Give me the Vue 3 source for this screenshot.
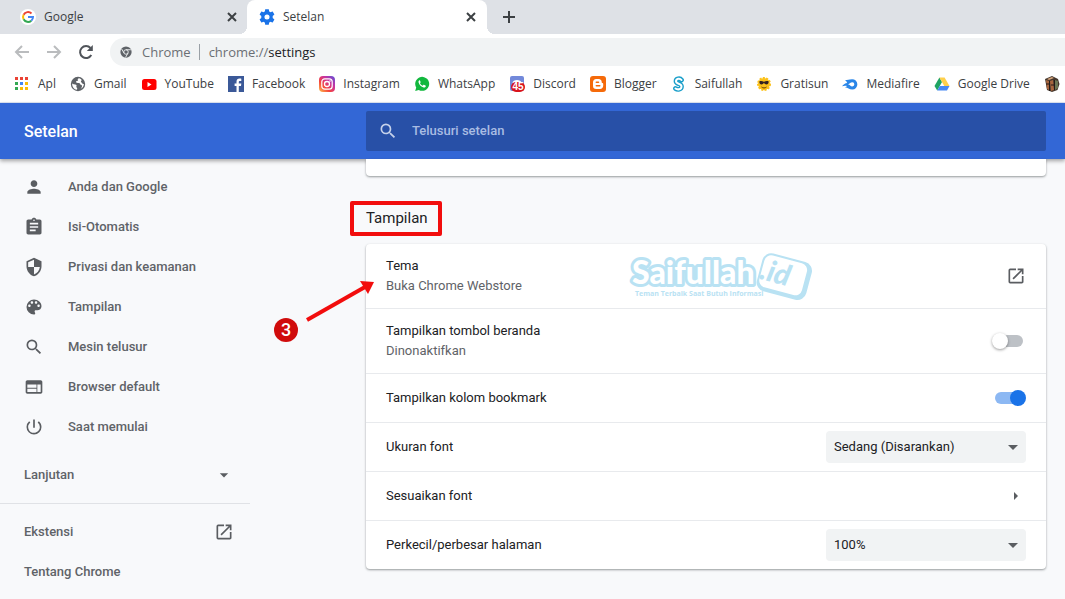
<script setup>
import { ref } from 'vue'

const search = ref('')
const homeButton = ref(false)
const bookmarkBar = ref(true)
const fontSize = ref('Sedang (Disarankan)')
const zoom = ref('100%')

const fontSizes = ['Sangat kecil', 'Kecil', 'Sedang (Disarankan)', 'Besar', 'Sangat besar']
const zooms = ['75%', '90%', '100%', '110%', '125%', '150%']

const searchPath = 'M15.5 14h-.79l-.28-.27A6.47 6.47 0 0 0 16 9.5 6.5 6.5 0 1 0 9.5 16c1.61 0 3.09-.59 4.23-1.57l.27.28v.79l5 4.99L20.49 19l-4.99-5zm-6 0C7.01 14 5 11.99 5 9.5S7.01 5 9.5 5 14 7.01 14 9.5 11.99 14 9.5 14z'
const openPath = 'M19 19H5V5h7V3H5a2 2 0 0 0-2 2v14a2 2 0 0 0 2 2h14c1.1 0 2-.9 2-2v-7h-2v7zM14 3v2h3.59l-9.83 9.83 1.41 1.41L19 6.41V10h2V3h-7z'

const menu = [
  { name: 'Anda dan Google', path: 'M12 12c2.21 0 4-1.79 4-4s-1.79-4-4-4-4 1.79-4 4 1.79 4 4 4zm0 2c-2.67 0-8 1.34-8 4v2h16v-2c0-2.66-5.33-4-8-4z' },
  { name: 'Isi-Otomatis', path: 'M19 3h-4.18C14.4 1.84 13.3 1 12 1s-2.4.84-2.82 2H5c-1.1 0-2 .9-2 2v14c0 1.1.9 2 2 2h14c1.1 0 2-.9 2-2V5c0-1.1-.9-2-2-2zm-7 0c.55 0 1 .45 1 1s-.45 1-1 1-1-.45-1-1 .45-1 1-1zm2 14H7v-2h7v2zm3-4H7v-2h10v2zm0-4H7V7h10v2z' },
  { name: 'Privasi dan keamanan', path: 'M12 1L3 5v6c0 5.55 3.84 10.74 9 12 5.16-1.26 9-6.45 9-12V5l-9-4zm0 10.99h7c-.53 4.12-3.28 7.79-7 8.94V12H5V6.3l7-3.11v8.8z' },
  { name: 'Tampilan', path: 'M12 3a9 9 0 0 0 0 18c.83 0 1.5-.67 1.5-1.5 0-.39-.15-.74-.39-1.01-.23-.26-.38-.61-.38-.99 0-.83.67-1.5 1.5-1.5H16c2.76 0 5-2.24 5-5 0-4.42-4.03-8-9-8zm-5.5 9c-.83 0-1.5-.67-1.5-1.5S5.67 9 6.5 9 8 9.67 8 10.5 7.33 12 6.5 12zm3-4C8.67 8 8 7.33 8 6.5S8.67 5 9.5 5s1.5.67 1.5 1.5S10.33 8 9.5 8zm5 0c-.83 0-1.5-.67-1.5-1.5S13.67 5 14.5 5s1.5.67 1.5 1.5S15.33 8 14.5 8zm3 4c-.83 0-1.5-.67-1.5-1.5S16.67 9 17.5 9s1.5.67 1.5 1.5-.67 1.5-1.5 1.5z' },
  { name: 'Mesin telusur', path: searchPath },
  { name: 'Browser default', path: 'M20 4H4c-1.1 0-1.99.9-1.99 2L2 18c0 1.1.9 2 2 2h16c1.1 0 2-.9 2-2V6c0-1.1-.9-2-2-2zm-5 14H4v-4h11v4zm0-5H4V9h11v4zm5 5h-4V9h4v9z' },
  { name: 'Saat memulai', path: 'M13 3h-2v10h2V3zm4.83 2.17l-1.42 1.42A6.92 6.92 0 0 1 19 12c0 3.87-3.13 7-7 7A6.995 6.995 0 0 1 7.58 6.58L6.17 5.17A8.932 8.932 0 0 0 3 12a9 9 0 0 0 18 0c0-2.74-1.23-5.18-3.17-6.83z' }
]

const bookmarks = [
  { name: 'Apl', icon: '<path fill="#ea4335" d="M1 1h3v3H1zM6 1h3v3H6zM11 1h3v3h-3z"/><path fill="#34a853" d="M1 6h3v3H1zM1 11h3v3H1z"/><path fill="#4285f4" d="M6 6h3v3H6z"/><path fill="#fbbc05" d="M11 6h3v3h-3zM6 11h3v3H6zM11 11h3v3h-3z"/>' },
  { name: 'Gmail', icon: '<circle cx="8" cy="8" r="7.2" fill="#5f6368"/><path fill="#fff" d="M9 2.300c-1 .3-1.500 1-1.200 1.600.4.700-.2 1.200-1 1.200-.9 0-.9.900-.5 1.300.7.600 2.200.2 3 .7.900.6.600 1.500 1.600 1.700 1 .2 1.300 1 1 1.900-.3 1-1 1.900-1.900 2.400a6 6 0 0 0 3.900-5.200c-.7.300-1.500.2-1.700-.6-.2-.8-1.200-.6-1.300-1.500 0-.8.8-.9.700-1.700C11.400 3.300 10.300 2.500 9 2.300zM2.200 7.500c.9.600 1.800 1 3 1 1.200.100 1.700.900 1.200 1.800-.3.600.1 1.100.5 1.500.5.500.3 1.300 0 2-2.800-.3-5-3-4.700-6.300z"/>' },
  { name: 'YouTube', icon: '<rect x="1" y="3" width="14.500" height="11" rx="2.500" fill="#f00"/><path fill="#fff" d="M6.500 6v5l4-2.500z"/>' },
  { name: 'Facebook', icon: '<path fill="#3b5998" d="M0 0h16v16H0z"/><path fill="#fff" d="M8.500 16V10H6.600V7.500h1.900V5.700c0-2 1.200-3.100 3-3.100.9 0 1.600.1 1.800.100v2.200H12c-1 0-1.200.5-1.200 1.200v1.400h2.500L13 10h-2.200v6z"/>' },
  { name: 'Instagram', icon: '<defs><linearGradient id="ig" x1="0" y1="1" x2="1" y2="0"><stop offset="0" stop-color="#fdc04b"/><stop offset=".35" stop-color="#f5433d"/><stop offset=".65" stop-color="#c832a0"/><stop offset="1" stop-color="#5851db"/></linearGradient></defs><rect width="16" height="16" rx="4" fill="url(#ig)"/><rect x="2.800" y="2.800" width="10.400" height="10.400" rx="3" fill="none" stroke="#fff" stroke-width="1.200"/><circle cx="8" cy="8" r="2.500" fill="none" stroke="#fff" stroke-width="1.300"/><circle cx="11" cy="5" r=".8" fill="#fff"/>' },
  { name: 'WhatsApp', icon: '<path fill="#12b83e" d="M1.200 15l1-3.500A7 7 0 1 1 4.800 14z"/><path fill="#fff" d="M5.600 4.300c-.8.300-1.300 1.200-1 2.300.7 2.500 2.600 4.300 5 4.900 1.100.2 2-.4 2.200-1.200.1-.5 0-.6-.4-.8L9.900 8.800c-.3-.1-.4 0-.6.200l-.6.7C7.500 9.300 6.500 8.300 6 7.200l.5-.6c.2-.2.200-.4.100-.600L6 4.600c-.1-.2-.2-.3-.4-.3z"/>' },
  { name: 'Discord', icon: '<rect x="1" y="0" width="14" height="15" rx="2" fill="#7289da"/><path fill="#fff" d="M3.500 7c0-4 9-4 9 0z"/><rect x="2" y="6" width="14" height="10" rx="5" fill="#d9141c"/><text x="9" y="14" text-anchor="middle" font-family="Liberation Sans, sans-serif" font-size="10" font-weight="bold" fill="#fff">45</text>' },
  { name: 'Blogger', icon: '<rect width="16" height="16" rx="3" fill="#f56a0a"/><path fill="#fff" fill-rule="evenodd" d="M6.200 3h2.500c1.900 0 3 1.400 3 3 0 .6.200 1 .8 1 .4 0 .7.300.7.700v2c0 1.900-1.300 3.300-3.200 3.300H6.200A3.200 3.200 0 0 1 3 9.800V6.200C3 4.300 4.300 3 6.200 3zm.1 2.600a.7.700 0 0 0 0 1.500h2.200a.7.700 0 0 0 0-1.500zm0 3.500a.7.700 0 0 0 0 1.500h3.500a.7.700 0 0 0 0-1.500z"/>' },
  { name: 'Saifullah', icon: '<path fill="none" stroke="#1b9fca" stroke-width="4.800" stroke-linecap="round" stroke-linejoin="round" d="M10.500 4C9 2 5 2.500 5 5.300 5 8.500 10.500 7 10.500 10.500 10.500 13.600 6.500 14 4.500 12.500"/><path fill="none" stroke="#fff" stroke-width="2" stroke-linecap="round" d="M10.500 4C9 2 5 2.500 5 5.300 5 8.500 10.500 7 10.500 10.500 10.500 13.600 6.500 14 4.500 12.500"/>' },
  { name: 'Gratisun', icon: '<circle cx="8" cy="8" r="6" fill="#fcc21b" stroke="#fcc21b" stroke-width="2" stroke-dasharray="2 1.300"/><path fill="#322" d="M3.300 5.500c1.400-.7 2.900-.5 4.700.3 1.800-.8 3.300-1 4.700-.3 0 1.800-.9 3-2.200 3C9.400 8.500 8.500 7.800 8 6.800c-.5 1-1.400 1.700-2.500 1.700-1.300 0-2.200-1.200-2.200-3z"/><path fill="none" stroke="#6b3b00" d="M5.500 11c1.500 1.300 3.500 1.300 5 0"/>' },
  { name: 'Mediafire', icon: '<path fill="#2a86e8" fill-rule="evenodd" d="M3 4c2 .2 3.500-.8 7-.8a5.200 5.200 0 0 1 .3 10.400c-3.300 0-4.300-2.100-7.300-2.300 1-.4 1.500-.8 2-1.300-1.500-.5-3-.4-5 .2 1.500-2 3.300-2.900 5.200-3.200C4.800 5.800 4 4.800 3 4zm7.200 2.200c-1.700 0-2.400 1.400-4.200 2 2 .4 2.500 2.200 4.300 2.200a2.100 2.100 0 0 0-.1-4.200z"/>' },
  { name: 'Google Drive', icon: '<path fill="#1fa463" d="M5.400 1.500L.5 10l2.700 4.500L8 6z"/><path fill="#ffd04b" d="M5.400 1.500h5.200L15.500 10h-5.200z"/><path fill="#4688f4" d="M3.200 14.500L5.800 10h9.700L13 14.500z"/>' },
  { name: '', icon: '<path fill="#45372d" d="M1 3l7-3 6 3 1.500 5-2 6L8 16l-5-2z"/><path fill="#a8653e" d="M2 4l3 1v9l-2-1zM6 5l3-1 1 10-3 1z"/><path fill="#d6a57c" d="M3 3l5-2 2 1-5 2z"/><path fill="#6b7554" d="M11 4l3 1v7l-3 2z"/><path stroke="#231b18" d="M5.500 5v10M10.500 4v10M2 8h3M7 9h3"/>' }
]
</script>

<template>
  <div class="browser">
    <div class="tabs">
      <div class="tab">
        <svg class="favicon" viewBox="0 0 16 16">
          <circle cx="8" cy="8" r="8" fill="#fff" />
          <g fill="none" stroke-width="2">
            <path stroke="#ea4335" d="M3.600 5.700A5 5 0 0 1 11.500 4.500" />
            <path stroke="#fbbc05" d="M3.600 10.300A5 5 0 0 1 3.600 5.700" />
            <path stroke="#34a853" d="M11.300 11.700A5 5 0 0 1 3.600 10.300" />
            <path stroke="#4285f4" d="M8 8h5a5 5 0 0 1-1.700 3.700" />
          </g>
        </svg>
        <span class="tab-name">Google</span>
        <button class="tab-close" aria-label="Tutup Google">
          <svg viewBox="0 0 10 10"><path d="M1 1l8 8M9 1L1 9" /></svg>
        </button>
      </div>
      <div class="tab active">
        <svg class="favicon" viewBox="0 0 24 24">
          <path fill="#1a73e8" d="M20.500 13.500c.1-.5.1-1 .1-1.500s0-1-.1-1.500l2.300-1.800c.2-.2.300-.5.100-.8l-2.200-3.800c-.1-.3-.4-.3-.7-.3l-2.800 1.100c-.7-.4-1.300-.8-2-1.100L14.800.9c0-.3-.3-.5-.6-.5H9.800c-.3 0-.5.200-.6.500l-.4 2.900c-.7.300-1.400.7-2 1.100L4 3.800c-.3 0-.6 0-.7.300L1.100 7.900c-.2.300-.1.600.1.800l2.300 1.800c-.1.500-.1 1-.1 1.500s0 1 .1 1.500l-2.300 1.800c-.2.200-.3.500-.1.800l2.200 3.800c.1.300.4.300.7.300l2.800-1.100c.6.400 1.300.8 2 1.100l.4 2.900c.1.300.3.500.6.500h4.400c.3 0 .6-.2.600-.5l.4-2.900c.7-.3 1.300-.7 2-1.100l2.800 1.100c.3 0 .6 0 .7-.3l2.200-3.800c.2-.3.100-.6-.1-.8zM12 15.800a3.800 3.800 0 1 1 0-7.600 3.800 3.800 0 0 1 0 7.600z" />
        </svg>
        <span class="tab-name">Setelan</span>
        <button class="tab-close" aria-label="Tutup Setelan">
          <svg viewBox="0 0 10 10"><path d="M1 1l8 8M9 1L1 9" /></svg>
        </button>
      </div>
      <button class="new-tab" aria-label="Tab baru">
        <svg viewBox="0 0 12 12"><path d="M6 0v12M0 6h12" /></svg>
      </button>
    </div>

    <div class="toolbar">
      <button class="nav off" aria-label="Kembali">
        <svg viewBox="0 0 16 16"><path d="M15 8H2M8 2L2 8l6 6" /></svg>
      </button>
      <button class="nav off" aria-label="Maju">
        <svg viewBox="0 0 16 16"><path d="M1 8h13M8 2l6 6-6 6" /></svg>
      </button>
      <button class="nav" aria-label="Muat ulang">
        <svg viewBox="0 0 16 16"><path d="M13.300 11A6 6 0 1 1 12.500 4" /><path class="solid" d="M14.800 1v6H8.800z" /></svg>
      </button>
      <div class="address">
        <svg class="chrome-icon" viewBox="0 0 16 16">
          <circle cx="8" cy="8" r="7.500" fill="#5f6368" />
          <circle cx="8" cy="8" r="3" fill="none" stroke="#f1f3f4" stroke-width="1.200" />
          <path d="M8 5h6.500M5.400 9.500L2.200 4M10.600 9.500l-3.200 5.700" stroke="#f1f3f4" stroke-width="1.200" />
        </svg>
        <span class="origin">Chrome</span>
        <span class="url">chrome://<b>settings</b></span>
      </div>
    </div>

    <nav class="bookmarks">
      <a v-for="(b, i) in bookmarks" :key="i" href="#" class="bookmark">
        <svg viewBox="0 0 16 16" v-html="b.icon"></svg>
        <span v-if="b.name">{{ b.name }}</span>
      </a>
    </nav>

    <header class="header">
      <h1>Setelan</h1>
      <label class="search">
        <svg viewBox="0 0 24 24"><path :d="searchPath" /></svg>
        <input v-model="search" type="text" placeholder="Telusuri setelan" aria-label="Telusuri setelan" />
      </label>
    </header>

    <div class="body">
      <aside class="sidebar">
        <a v-for="item in menu" :key="item.name" href="#" class="menu-item">
          <svg class="icon" viewBox="0 0 24 24"><path :d="item.path" /></svg>
          {{ item.name }}
        </a>
        <button class="menu-item advanced">
          Lanjutan
          <svg class="icon" viewBox="0 0 24 24"><path d="M7 10l5 5 5-5z" /></svg>
        </button>
        <div class="links">
          <a href="#" class="menu-item spread">
            Ekstensi
            <svg class="icon" viewBox="0 0 24 24"><path :d="openPath" /></svg>
          </a>
          <a href="#" class="menu-item">Tentang Chrome</a>
        </div>
      </aside>

      <main class="content">
        <div class="card previous"></div>
        <h2>Tampilan</h2>

        <div class="card">
          <div class="row tall">
            <div>
              <div>Tema</div>
              <div class="sub">Buka Chrome Webstore</div>
            </div>
            <button class="icon-button" aria-label="Buka Chrome Webstore">
              <svg class="icon" viewBox="0 0 24 24"><path :d="openPath" /></svg>
            </button>
          </div>
          <div class="row tall">
            <label for="home">
              Tampilkan tombol beranda
              <span class="sub">Dinonaktifkan</span>
            </label>
            <input id="home" v-model="homeButton" class="switch" type="checkbox" />
          </div>
          <div class="row">
            <label for="bar">Tampilkan kolom bookmark</label>
            <input id="bar" v-model="bookmarkBar" class="switch" type="checkbox" />
          </div>
          <div class="row">
            <label for="size">Ukuran font</label>
            <div class="select">
              <select id="size" v-model="fontSize">
                <option v-for="s in fontSizes" :key="s">{{ s }}</option>
              </select>
              <svg viewBox="0 0 10 5"><path d="M0 0h10L5 5z" /></svg>
            </div>
          </div>
          <div class="row">
            <span>Sesuaikan font</span>
            <button class="icon-button" aria-label="Sesuaikan font">
              <svg class="icon" viewBox="0 0 20 20"><path d="M8 6l4 4-4 4z" /></svg>
            </button>
          </div>
          <div class="row">
            <label for="zoom">Perkecil/perbesar halaman</label>
            <div class="select">
              <select id="zoom" v-model="zoom">
                <option v-for="z in zooms" :key="z">{{ z }}</option>
              </select>
              <svg viewBox="0 0 10 5"><path d="M0 0h10L5 5z" /></svg>
            </div>
          </div>

          <svg class="watermark" viewBox="0 0 184 52">
            <text class="brand" x="3" y="33">Saifullah</text>
            <text class="slogan" x="6" y="45">Teman Terbaik Saat Butuh Informasi</text>
            <g transform="rotate(15 155 25)">
              <rect x="130" y="6" width="51" height="39" rx="9" fill="#b9e2f3" />
              <rect x="132" y="8" width="44" height="33" rx="7" fill="#fff" />
              <text class="domain" x="131" y="34">.id</text>
            </g>
          </svg>
          <svg class="step" viewBox="0 0 104 64">
            <path d="M34 41L92 8" stroke="#f20d0d" stroke-width="4" />
            <path d="M101 3L87 2l8 13z" fill="#f20d0d" />
            <circle cx="13" cy="51" r="12" fill="#d00c0c" />
            <text x="13" y="57" text-anchor="middle">3</text>
          </svg>
        </div>
      </main>
    </div>
  </div>
</template>

<style>
body {
  margin: 0;
  background: #f8f9fb;
}
</style>

<style scoped>
* {
  box-sizing: border-box;
}

.browser {
  min-height: 100vh;
  overflow: hidden;
  font: 13px/20px Roboto, sans-serif;
  color: #202124;
}

button {
  padding: 0;
  border: 0;
  background: none;
  font: inherit;
  color: inherit;
}

a {
  color: inherit;
  text-decoration: none;
}

.tabs {
  display: flex;
  height: 34px;
  background: #dee1e6;
  font: 12px/16px "Open Sans", sans-serif;
  color: #3c4043;
}

.tab {
  display: flex;
  align-items: center;
  width: 247px;
  padding: 0 10px 0 20px;
}

.tab.active {
  position: relative;
  width: 240px;
  padding: 0 11px 0 12px;
  background: #fff;
  border-radius: 8px 8px 0 0;
}

.tab.active::before,
.tab.active::after {
  content: '';
  position: absolute;
  bottom: 0;
  width: 8px;
  height: 8px;
}

.tab.active::before {
  right: 100%;
  background: radial-gradient(circle at 0 0, transparent 8px, #fff 8px);
}

.tab.active::after {
  left: 100%;
  background: radial-gradient(circle at 100% 0, transparent 8px, #fff 8px);
}

.favicon {
  width: 16px;
  height: 16px;
  margin-right: 8px;
}

.tab-name {
  flex: 1;
}

.tab-close {
  display: flex;
}

.tab-close svg {
  width: 10px;
  height: 10px;
  stroke: #3c4043;
  stroke-width: 2;
}

.new-tab {
  display: flex;
  align-items: center;
  margin-left: 16px;
}

.new-tab svg {
  width: 12px;
  height: 12px;
  stroke: #3c4043;
  stroke-width: 2;
}

.toolbar {
  display: flex;
  align-items: center;
  gap: 16px;
  height: 36px;
  padding-left: 14px;
  background: #fff;
}

.nav {
  display: flex;
}

.nav svg {
  width: 16px;
  height: 16px;
  fill: none;
  stroke: #50545a;
  stroke-width: 2;
}

.nav.off svg {
  stroke: #babcbe;
}

.nav .solid {
  fill: #50545a;
  stroke: none;
}

.address {
  display: flex;
  align-items: center;
  flex: 1;
  height: 28px;
  padding-left: 10px;
  border-radius: 14px 0 0 14px;
  background: #f1f3f4;
  font: 13px/20px "Open Sans", sans-serif;
  color: #6b6f74;
}

.chrome-icon {
  width: 12px;
  height: 12px;
  margin-right: 10px;
}

.origin {
  padding-right: 8px;
  border-right: 1px solid #9aa0a6;
  line-height: 16px;
}

.url {
  padding-left: 9px;
}

.url b {
  font-weight: normal;
  color: #202124;
}

.bookmarks {
  display: flex;
  align-items: center;
  gap: 14px;
  height: 33px;
  padding: 0 0 4px 14px;
  border-bottom: 1px solid #dfe6f5;
  background: #fff;
  font: 12px/16px "Open Sans", sans-serif;
  color: #3c4043;
}

.bookmark {
  display: flex;
  flex: none;
  gap: 8px;
  white-space: nowrap;
}

.bookmark svg {
  width: 16px;
  height: 16px;
}

.header {
  position: relative;
  display: flex;
  align-items: center;
  height: 56px;
  padding: 0 19px 0 24px;
  background: #3367d6;
  box-shadow: 0 2px 4px rgba(0, 0, 0, .35);
  color: #fff;
}

.header h1 {
  flex: 0 0 342px;
  margin: 0;
  padding-top: 2px;
  font-size: 16px;
  font-weight: 500;
}

.search {
  display: flex;
  align-items: center;
  flex: 1;
  height: 40px;
  padding: 0 12px;
  gap: 14px;
  border-radius: 2px;
  background: #2850a7;
}

.search svg {
  width: 20px;
  height: 20px;
  fill: #c5d1ea;
}

.search input {
  flex: 1;
  padding: 0;
  border: 0;
  outline: 0;
  background: none;
  font: 500 13px/20px Roboto, sans-serif;
  color: #fff;
}

.search input::placeholder {
  color: #a9bce3;
}

.body {
  display: flex;
}

.sidebar {
  width: 250px;
  padding-top: 8px;
  font-weight: 500;
  color: #5f6368;
}

.icon {
  flex: none;
  width: 20px;
  height: 20px;
  fill: #5a5d61;
}

.menu-item {
  display: flex;
  align-items: center;
  gap: 24px;
  height: 40px;
  padding: 0 16px 0 24px;
}

.advanced {
  justify-content: space-between;
  width: 100%;
  height: 40px;
  margin: 8px 0;
}

.spread {
  justify-content: space-between;
}

.links {
  border-top: 1px solid #e0e2e6;
  padding-top: 8px;
}

.content {
  flex: 1;
  padding: 0 19px 30px 116px;
}

.card {
  position: relative;
  border-radius: 4px;
  background: #fff;
  box-shadow: 0 1px 2px rgba(60, 64, 67, .4), 0 1px 3px rgba(60, 64, 67, .15);
}

.previous {
  height: 17px;
  border-radius: 0 0 4px 4px;
}

h2 {
  width: fit-content;
  margin: 25px 0 8px -16px;
  padding: 3px 10px 4px 12px;
  border: 4px solid #f20d0d;
  border-radius: 2px;
  font-size: 15px;
  font-weight: 400;
  line-height: 20px;
}

.row {
  display: flex;
  align-items: center;
  justify-content: space-between;
  box-sizing: content-box;
  min-height: 48px;
  padding: 0 20px;
}

.row + .row {
  border-top: 1px solid #e8eaed;
}

.tall {
  min-height: 64px;
}

.sub {
  display: block;
  color: #5f6368;
}

.icon-button {
  display: flex;
}

.switch {
  position: relative;
  appearance: none;
  width: 28px;
  height: 12px;
  margin: 0 3px;
  border-radius: 6px;
  background: #bdc1c6;
}

.switch::before {
  content: '';
  position: absolute;
  top: -2px;
  left: -3px;
  width: 16px;
  height: 16px;
  border-radius: 50%;
  background: #fff;
  box-shadow: 0 1px 3px rgba(0, 0, 0, .4);
}

.switch:checked {
  background: #8cb8f3;
}

.switch:checked::before {
  left: 15px;
  background: #1a73e8;
  box-shadow: none;
}

.select {
  display: grid;
  align-items: center;
  width: 200px;
}

.select > * {
  grid-area: 1 / 1;
}

.select select {
  appearance: none;
  height: 32px;
  padding: 0 28px 0 8px;
  border: 0;
  border-radius: 4px;
  background: #f1f3f4;
  font: inherit;
  color: inherit;
}

.select svg {
  justify-self: end;
  width: 10px;
  height: 5px;
  margin-right: 8px;
  fill: #5a5d61;
  pointer-events: none;
}

.watermark {
  position: absolute;
  top: 7px;
  left: 263px;
  width: 184px;
  height: 52px;
}

.brand {
  font: 900 32px Lato, sans-serif;
  fill: #fff;
  stroke: #b9e2f3;
  stroke-width: 6px;
  stroke-linejoin: round;
  paint-order: stroke;
}

.slogan {
  font: 700 7px "Open Sans", sans-serif;
  fill: #b9e2f3;
}

.domain {
  font: italic 900 29px Lato, sans-serif;
  fill: #b9e2f3;
}

.step {
  position: absolute;
  top: 35px;
  left: -93px;
  width: 104px;
  height: 64px;
}

.step text {
  font: 500 18px Roboto, sans-serif;
  fill: #fff;
}
</style>
